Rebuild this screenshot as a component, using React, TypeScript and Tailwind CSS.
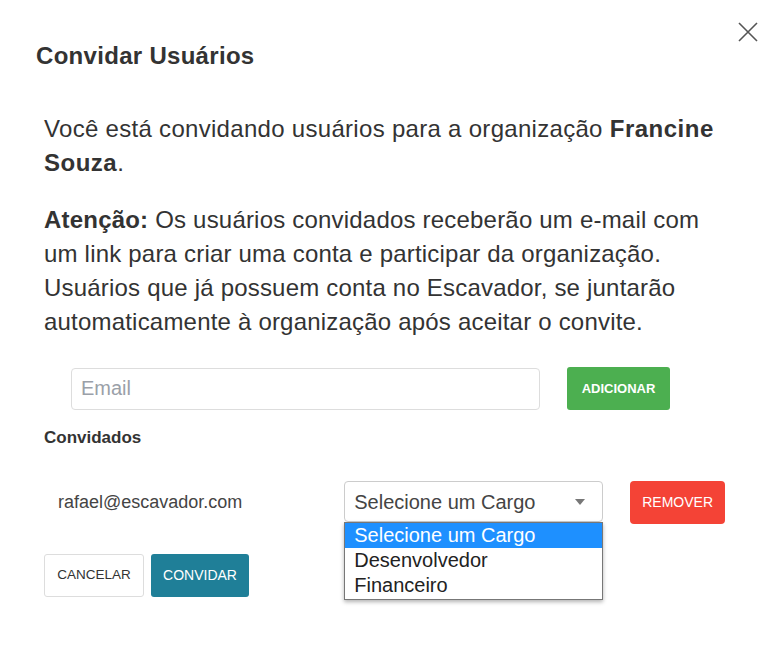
export default function App() {
  const font = { fontFamily: "'Liberation Sans', Arial, sans-serif" };
  return (
    <div className="relative min-h-[659px] w-[769px] bg-white text-[#333]" style={font}>
      <button className="absolute right-[6px] top-[17px] p-1 text-[#555]">
        <svg width="22" height="22" viewBox="0 0 22 22" fill="none" stroke="currentColor" strokeWidth="1.6">
          <path d="M2 2 L20 20 M20 2 L2 20" />
        </svg>
      </button>

      <div className="px-[36px] pt-[42px]">
        <h2 className="text-[24px] font-bold leading-[28px] tracking-[0.3px] text-[#333]">Convidar Usuários</h2>
      </div>

      <div className="px-[44px] pt-[42px]">
        <p className="text-[24px] leading-[34px] tracking-[0.3px] text-[#333]">
          Você está convidando usuários para a organização <b className="tracking-[0.5px]">Francine Souza</b>.
        </p>
        <p className="mt-[23px] text-[24px] leading-[34px] tracking-[0.2px] text-[#333]">
          <b>Atenção:</b> Os usuários convidados receberão um e-mail com um link para criar uma conta e participar da
          organização. Usuários que já possuem conta no Escavador, se juntarão automaticamente à organização após aceitar
          o convite.
        </p>

        <div className="mt-[28px] flex items-center gap-[27px] pl-[27px]">
          <input
            placeholder="Email"
            className="h-[42px] w-[469px] rounded-[4px] border border-[#ddd] px-[9px] text-[20px] text-[#333] placeholder:text-[#9aa0a8] outline-none"
          />
          <button className="h-[43px] w-[103px] rounded-[3px] bg-[#4caf50] text-[13px] font-bold text-white">
            ADICIONAR
          </button>
        </div>

        <h3 className="mt-[17px] text-[17px] font-bold leading-[22px] text-[#333]">Convidados</h3>

        <div className="mt-[32px] flex items-start">
          <span className="w-[301px] pl-[14px] pt-[8px] text-[18px] text-[#444]">rafael@escavador.com</span>
          <div className="relative">
            <div className="flex h-[41px] w-[259px] items-center justify-between rounded-[4px] border border-[#ccc] pl-[9px] pr-[17px] text-[20px] text-[#444]">
              <span>Selecione um Cargo</span>
              <svg width="10" height="6" viewBox="0 0 10 6">
                <path d="M0 0 L10 0 L5 6 Z" fill="#777" />
              </svg>
            </div>
            <div className="absolute left-0 top-[41px] z-10 w-[259px] border border-[#777] bg-white text-[20px] leading-[25px] shadow-[0_2px_4px_rgba(0,0,0,0.3)]">
              <div className="bg-[#1e90ff] pl-[9px] text-white">Selecione um Cargo</div>
              <div className="pl-[9px] text-[#222]">Desenvolvedor</div>
              <div className="pl-[9px] pb-[1px] text-[#222]">Financeiro</div>
            </div>
          </div>
          <button className="ml-[27px] h-[43px] w-[95px] rounded-[4px] bg-[#f44336] text-[14px] text-white">
            REMOVER
          </button>
        </div>

        <div className="mt-[30px] flex gap-[7px]">
          <button className="h-[43px] w-[100px] rounded-[3px] border border-[#ddd] bg-white text-[13.5px] text-[#333]">
            CANCELAR
          </button>
          <button className="h-[43px] w-[98px] rounded-[3px] bg-[#1f7f98] text-[14px] text-white">CONVIDAR</button>
        </div>
      </div>
    </div>
  );
}
